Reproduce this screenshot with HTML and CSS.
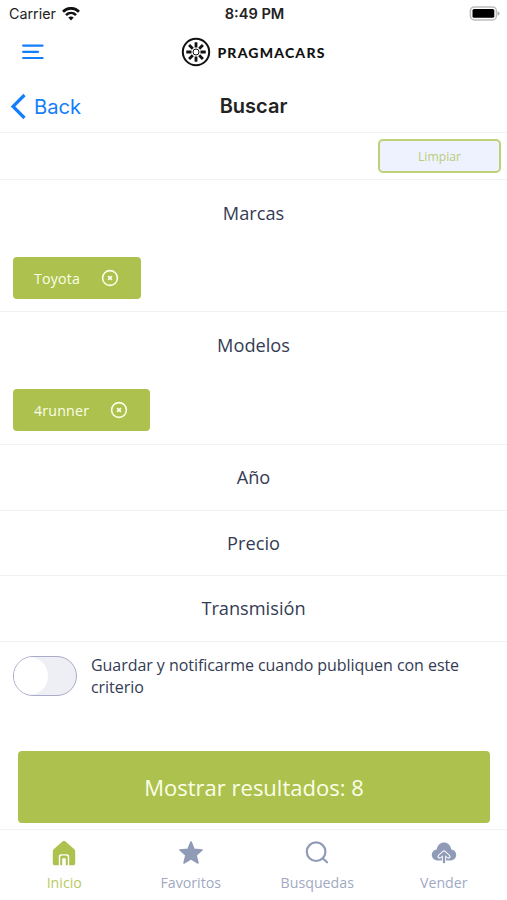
FILE: index.html
```html
<!DOCTYPE html>
<html lang="es">
<head>
<meta charset="utf-8">
<meta name="viewport" content="width=device-width, initial-scale=1">
<title>Buscar</title>
<link rel="stylesheet" href="styles.css">
</head>
<body>
<div class="app">
  <div class="status">
    <div class="carrier"><span>Carrier</span>
      <svg width="18" height="14" viewBox="0 0 18 14" fill="none" stroke="#111" stroke-width="2.7"><path d="M1 4.7C5.5.2 12.5.2 17 4.7"/><path d="M4 8.1c2.9-2.8 7.1-2.8 10 0"/><path d="M6.3 10.6c1.6-1.4 3.8-1.4 5.4 0L9 13.4z" fill="#111" stroke="none"/></svg>
    </div>
    <div class="clock">8:49 PM</div>
    <svg class="battery" width="31" height="15" viewBox="0 0 31 15"><rect x="1.4" y=".9" width="26" height="13" rx="4" fill="#fff" stroke="#bdbdbd" stroke-width="1.5"/><rect x="3.5" y="3" width="21.8" height="8.8" rx="1.6" fill="#000"/><path d="M28.6 5.2q2 .8 2 2.3t-2 2.3z" fill="#aaa"/></svg>
  </div>
  <header class="brandbar">
    <svg class="menu" width="22" height="16" viewBox="0 0 22 16" stroke="#147efb" stroke-width="2.2" stroke-linecap="round"><path d="M1.1 1.6h19.5M1.1 7.8h15M1.1 14h19.5"/></svg>
    <div class="brand">
      <svg width="30" height="30" viewBox="0 0 30 30" fill="none" stroke="#111"><circle cx="15" cy="15" r="13.2" stroke-width="2"/><circle cx="15" cy="15" r="3" stroke-width="1"/><g stroke-width="2.8"><path d="M15 5.3v5.2M15 19.5v5.2M5.3 15h5.2M19.5 15h5.2M8.1 8.1l3.7 3.7M18.2 18.2l3.7 3.7M21.9 8.1l-3.7 3.7M11.8 18.2l-3.7 3.7"/></g></svg>
      <span>PRAGMACARS</span>
    </div>
  </header>
  <nav class="navbar">
    <div class="back"><svg width="17" height="27" viewBox="0 0 17 27" fill="none" stroke="#147efb" stroke-width="3.2"><path d="M15.5 2L4 13.5 15.5 25"/></svg><span>Back</span></div>
    <h1>Buscar</h1>
  </nav>
  <div class="tools"><button class="clear">Limpiar</button></div>
  <section class="filter open">
    <h2>Marcas</h2>
    <button class="chip">Toyota <svg width="18" height="18" viewBox="0 0 18 18" fill="none" stroke="#fbffe9"><circle cx="9" cy="9" r="7.4" stroke-width="1.6"/><path d="M7.1 7.1l3.8 3.8M10.9 7.1l-3.8 3.8" stroke-width="1.7"/></svg></button>
  </section>
  <section class="filter open second">
    <h2>Modelos</h2>
    <button class="chip wide">4runner <svg width="18" height="18" viewBox="0 0 18 18" fill="none" stroke="#fbffe9"><circle cx="9" cy="9" r="7.4" stroke-width="1.6"/><path d="M7.1 7.1l3.8 3.8M10.9 7.1l-3.8 3.8" stroke-width="1.7"/></svg></button>
  </section>
  <section class="filter tall"><h2>Año</h2></section>
  <section class="filter"><h2>Precio</h2></section>
  <section class="filter tall"><h2>Transmisión</h2></section>
  <div class="notify">
    <div class="toggle"><div class="knob"></div></div>
    <p>Guardar y notificarme cuando publiquen con este<br>criterio</p>
  </div>
  <button class="submit">Mostrar resultados: 8</button>
  <footer class="tabs">
    <a class="tab active"><svg width="28" height="28" viewBox="0 0 28 28"><path d="M12.8 2.2q1.2-1 2.4 0l9.2 8.1q.8.8.8 1.9v12.3q0 1.8-1.8 1.8h-4.2v-8.8q0-2.3-2.3-2.3h-5.8q-2.3 0-2.3 2.3v8.8H4.6q-1.8 0-1.8-1.8V12.2q0-1.1.8-1.9z" fill="#adc14e"/><path d="M10.2 26.3v-8q0-1.7 1.7-1.7h4.2q1.7 0 1.7 1.7v8h-2v-7.1h-3.6v7.1z" fill="#adc14e"/></svg><span>Inicio</span></a>
    <a class="tab"><svg width="28" height="28" viewBox="0 0 28 28"><path d="M14 2.9l3.1 7.3 8 .7-6 5.2 1.9 7.9-7-4.2L7 24l1.9-7.9-6-5.2 8-.7z" fill="#8f9bb7" stroke="#8f9bb7" stroke-width="1.5" stroke-linejoin="round"/></svg><span>Favoritos</span></a>
    <a class="tab"><svg width="28" height="28" viewBox="0 0 28 28" fill="none" stroke="#8f9bb7" stroke-width="2.2" stroke-linecap="round"><circle cx="13.1" cy="12.7" r="9.3"/><path d="M19.7 19.3l4.3 4"/></svg><span>Busquedas</span></a>
    <a class="tab"><svg width="28" height="28" viewBox="0 0 28 28" fill="none"><path d="M7.5 21.5C3.5 21.2 1.6 18.4 1.8 15.5c.2-2.8 2.4-4.8 4.8-5C7.7 6 10.4 3.6 14 3.6s6.3 2.4 7.4 6.9c2.4.2 4.6 2.2 4.8 5 .2 2.9-1.7 5.7-5.7 6z" fill="#8f9bb7"/><path d="M14 25V13.5M9.6 17.5L14 13.5l4.4 4" stroke="#fff" stroke-width="4.2" stroke-linecap="round" stroke-linejoin="round"/><path d="M14 23.2v-9.4M9.8 17.4l4.2-3.8 4.2 3.8" stroke="#8f9bb7" stroke-width="2.3" stroke-linecap="round" stroke-linejoin="round"/></svg><span>Vender</span></a>
  </footer>
</div>
</body>
</html>
```
FILE: styles.css
```css
* { box-sizing: border-box; }
body { margin: 0; background: #fff; font-family: "Open Sans", "Noto Sans", sans-serif; color: #343b54; }
button { font: inherit; padding: 0; border: 0; }
h1, h2, p { margin: 0; font-weight: 400; }
svg { display: block; flex: none; }
.app { width: 507px; height: 900px; display: flex; flex-direction: column; overflow: hidden; }
.app > * { flex: none; }
.status { height: 27px; display: grid; grid-template-columns: 1fr auto 1fr; align-items: center; padding: 0 7px 0 9px; font-family: Inter, sans-serif; color: #222; }
.carrier { display: flex; gap: 6px; align-items: center; font-size: 14.3px; }
.clock { font-weight: 600; font-size: 14.6px; }
.battery { justify-self: end; }
.brandbar { height: 52px; display: grid; grid-template-columns: 1fr auto 1fr; align-items: center; padding: 0 22px 2px; }
.brand { display: flex; align-items: center; gap: 6px; font: 900 14px Lato, sans-serif; letter-spacing: 1.2px; color: #111; }
.brand span { padding-top: 1px; }
.navbar { height: 54px; border-bottom: 1px solid #f2f3f4; display: grid; grid-template-columns: 1fr auto 1fr; align-items: center; font-family: Inter, sans-serif; padding: 1px 9px 0; }
.back { display: flex; align-items: center; gap: 8px; color: #147efb; font-size: 20.2px; }
h1 { font-size: 20px; font-weight: 600; color: #222; }
.tools { height: 47px; padding: 6px 6px 0; border-bottom: 1px solid #f2f3f4; display: flex; justify-content: flex-end; }
.clear { width: 123px; height: 34px; border: 2px solid #bdd278; border-radius: 5px; background: #eef2fe; color: #b9cd78; font-size: 12.2px; }
.filter { height: 65px; border-bottom: 1px solid #f1f2f4; }
.filter.tall { height: 66px; }
.filter.open { height: 132px; }
.filter.open.second { height: 133px; }
h2 { height: 65px; line-height: 65px; font-size: 18.2px; text-align: center; }
.open h2 { line-height: 67px; }
.chip { margin: 12px 0 0 13px; width: 128px; height: 42px; border-radius: 4px; background: #adc14e; color: #fbffe9; font-size: 14.2px; letter-spacing: .2px; display: flex; align-items: center; justify-content: space-between; padding: 0 22px 0 21px; }
.chip.wide { width: 137px; }
.notify { height: 109px; padding: 14px 13px 0; display: flex; gap: 14px; }
.toggle { width: 64px; height: 40px; border: 1.5px solid #a9abc8; border-radius: 20px; background: #eeeff5; overflow: hidden; }
.knob { width: 34px; height: 38px; border-radius: 0 19px 19px 0; background: #fff; }
.notify p { margin-top: -2px; font-size: 16px; letter-spacing: -.05px; line-height: 22px; white-space: nowrap; }
.submit { width: 472px; height: 72px; margin-left: 18px; background: #adc14e; color: #fbffe9; border-radius: 4px; font-size: 22px; }
.tabs { margin-top: 6px; height: 72px; border-top: 1px solid #f2f3f4; display: grid; grid-template-columns: repeat(4, 126.5px); padding-left: 1px; }
.tab { display: flex; flex-direction: column; align-items: center; padding-top: 9px; color: #a0aac2; font-size: 14.2px; }
.tab span { line-height: 20px; margin-top: 6px; }
.tab.active { color: #b7ca61; }
```
